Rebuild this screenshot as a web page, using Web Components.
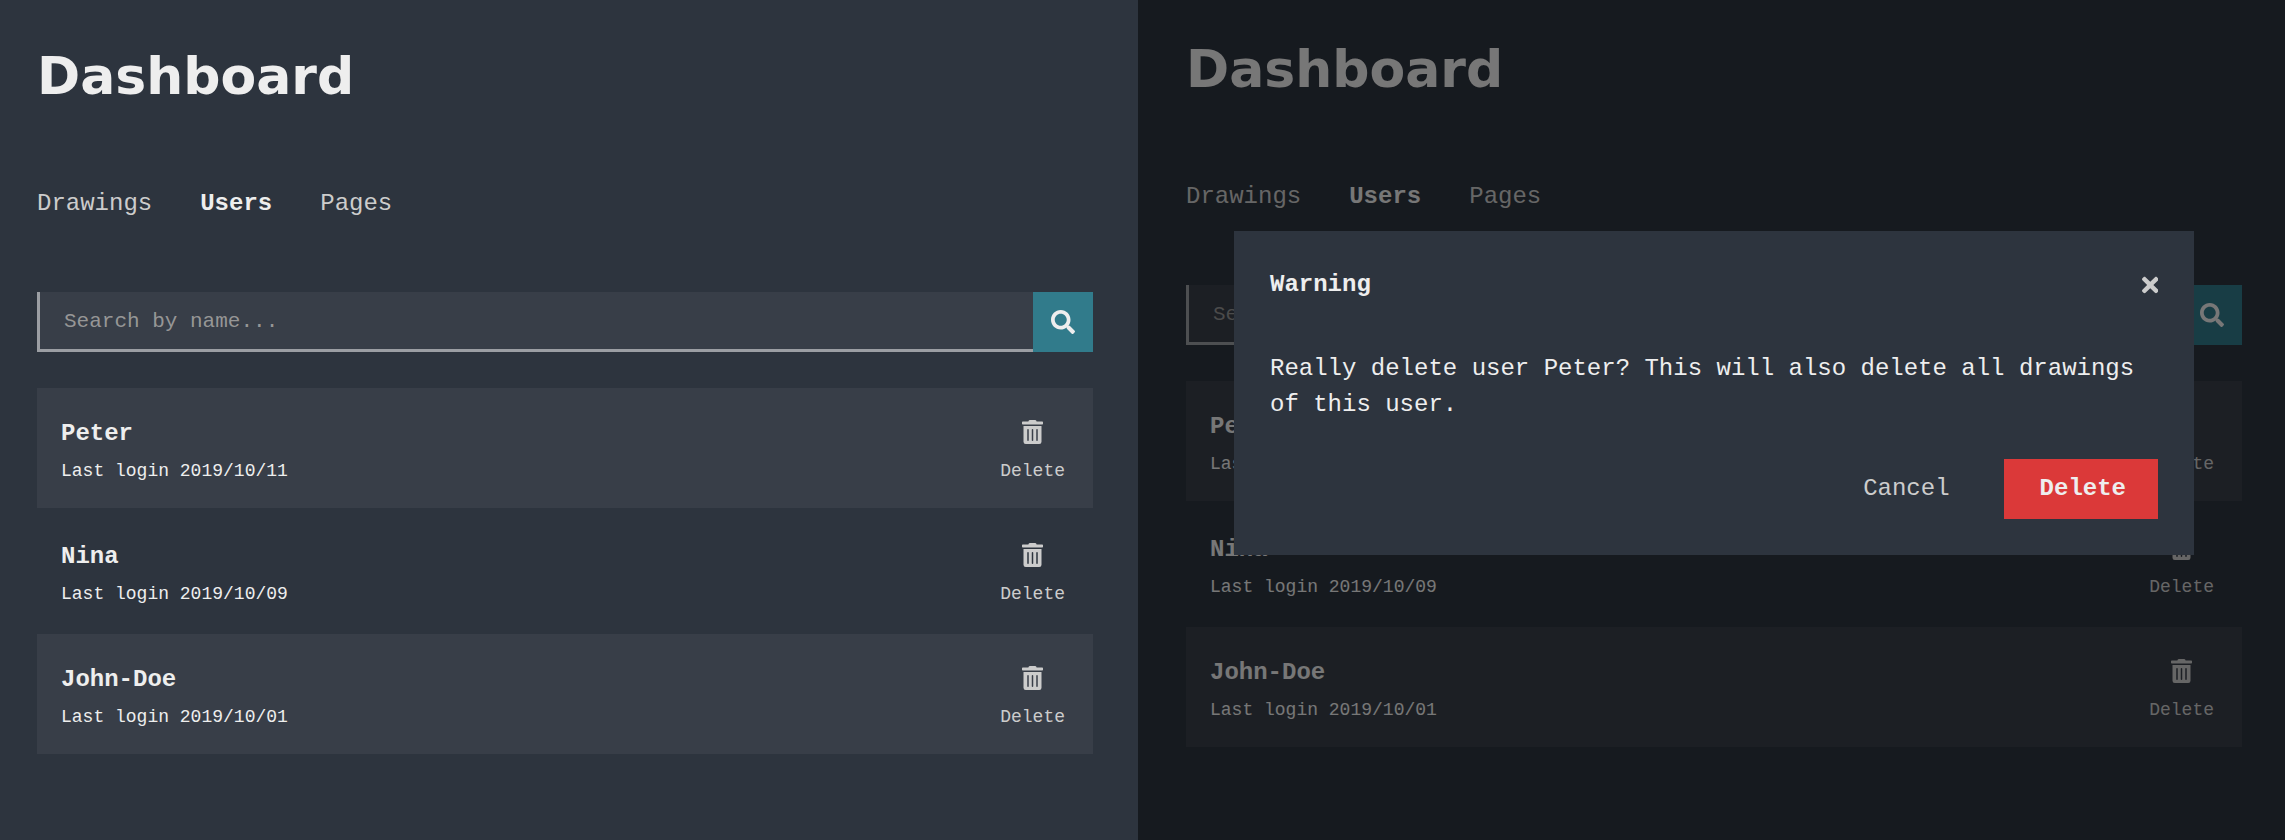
<!DOCTYPE html>
<html lang="en">
<head>
<meta charset="utf-8">
<title>Dashboard</title>
<style>
  :root {
    --bg: #2d343e;
    --raised: #383e48;
    --text: #eeeeee;
    --muted: #cccccc;
    --accent: #317b8b;
    --danger: #db3939;
  }
  body {
    margin: 0;
    background: var(--bg);
    color: var(--text);
    font: 24px/36px "Liberation Mono", monospace;
  }
</style>
</head>
<body>
<split-screen>
  <dashboard-page>
    <user-row name="Peter" login="2019/10/11"></user-row>
    <user-row name="Nina" login="2019/10/09"></user-row>
    <user-row name="John-Doe" login="2019/10/01"></user-row>
  </dashboard-page>
  <dashboard-page class="dimmed">
    <user-row name="Peter" login="2019/10/11"></user-row>
    <user-row name="Nina" login="2019/10/09"></user-row>
    <user-row name="John-Doe" login="2019/10/01"></user-row>
    <confirm-dialog slot="overlay" heading="Warning" action="Delete">Really delete user Peter? This will also delete all drawings of this user.</confirm-dialog>
  </dashboard-page>
</split-screen>

<script>
const ICONS = {
  search: ['0 0 512 512', 'M505 442.7L405.3 343c-4.5-4.5-10.6-7-17-7H372c27.6-35.3 44-79.7 44-128C416 93.1 322.9 0 208 0S0 93.1 0 208s93.1 208 208 208c48.3 0 92.7-16.4 128-44v16.3c0 6.4 2.5 12.5 7 17l99.7 99.7c9.4 9.4 24.6 9.4 33.9 0l28.3-28.3c9.4-9.4 9.4-24.6.1-34zM208 336c-70.7 0-128-57.2-128-128 0-70.7 57.2-128 128-128 70.7 0 128 57.2 128 128 0 70.7-57.2 128-128 128z'],
  trash: ['0 0 448 512', 'M32 464a48 48 0 0 0 48 48h288a48 48 0 0 0 48-48V128H32zm272-256a16 16 0 0 1 32 0v224a16 16 0 0 1-32 0zm-96 0a16 16 0 0 1 32 0v224a16 16 0 0 1-32 0zm-96 0a16 16 0 0 1 32 0v224a16 16 0 0 1-32 0zM432 32H312l-9.4-18.7A24 24 0 0 0 281.1 0H166.8a23.72 23.72 0 0 0-21.4 13.3L136 32H16A16 16 0 0 0 0 48v32a16 16 0 0 0 16 16h416a16 16 0 0 0 16-16V48a16 16 0 0 0-16-16z'],
  close: ['0 0 352 512', 'M242.72 256l100.07-100.07c12.28-12.28 12.28-32.19 0-44.48l-22.24-22.24c-12.28-12.28-32.19-12.28-44.48 0L176 189.28 75.93 89.21c-12.28-12.28-32.19-12.28-44.48 0L9.21 111.45c-12.28 12.28-12.28 32.19 0 44.48L109.28 256 9.21 356.07c-12.28 12.28-12.28 32.19 0 44.48l22.24 22.24c12.28 12.28 32.2 12.28 44.48 0L176 322.72l100.07 100.07c12.28 12.28 32.2 12.28 44.48 0l22.24-22.24c12.28-12.28 12.28-32.19 0-44.48L242.72 256z']
};
const RESET = `
  *, *::before, *::after { box-sizing: border-box; }
  button { margin: 0; padding: 0; border: 0; background: none; color: inherit; font: inherit; cursor: pointer; }
`;

class AppIcon extends HTMLElement {
  connectedCallback() {
    const [box, path] = ICONS[this.getAttribute('name')];
    this.attachShadow({ mode: 'open' }).innerHTML = `
      <style>
        :host { display: flex; }
        svg { display: block; height: 24px; fill: currentColor; }
      </style>
      <svg viewBox="${box}" aria-hidden="true"><path d="${path}"/></svg>`;
  }
}

class SplitScreen extends HTMLElement {
  connectedCallback() {
    this.attachShadow({ mode: 'open' }).innerHTML = `
      <style>
        :host { display: grid; grid-template-columns: 1138fr 1147fr; min-height: 100vh; }
        ::slotted(*) { --page-padding: 46px 45px 36px 37px; }
        ::slotted(.dimmed) { --page-padding: 39px 43px 36px 48px; }
      </style>
      <slot></slot>`;
  }
}

class NavTabs extends HTMLElement {
  connectedCallback() {
    this.attachShadow({ mode: 'open' }).innerHTML = `
      <style>
        :host { display: block; }
        nav { display: flex; gap: 48px; }
        a { color: var(--muted); text-decoration: none; }
        a[aria-current] { color: var(--text); font-weight: bold; }
      </style>
      <nav aria-label="Sections">
        <a href="#drawings">Drawings</a>
        <a href="#users" aria-current="page">Users</a>
        <a href="#pages">Pages</a>
      </nav>`;
  }
}

class SearchBox extends HTMLElement {
  connectedCallback() {
    this.attachShadow({ mode: 'open' }).innerHTML = `
      <style>
        ${RESET}
        :host { display: block; }
        form { display: flex; height: 60px; }
        input {
          flex: 1; min-width: 0; margin: 0; padding: 2px 24px 0;
          border: solid #9b9ea3; border-width: 0 0 3px 3px; border-radius: 0;
          background: var(--raised); color: var(--text);
          font: 21px "Liberation Mono", monospace; outline: 0;
        }
        input::placeholder { color: #969696; opacity: 1; }
        button { width: 60px; display: grid; place-items: center; background: var(--accent); color: var(--text); }
      </style>
      <form role="search" onsubmit="return false">
        <input type="text" placeholder="Search by name..." aria-label="Search by name">
        <button aria-label="Search"><app-icon name="search"></app-icon></button>
      </form>`;
  }
}

class UserRow extends HTMLElement {
  connectedCallback() {
    this.attachShadow({ mode: 'open' }).innerHTML = `
      <style>
        ${RESET}
        :host { display: block; }
        article { display: flex; justify-content: space-between; padding: 28px 28px 18px 24px; }
        h2 { margin: 0; font-size: 24px; line-height: 36px; }
        p { margin: 0; font-size: 18px; line-height: 38px; }
        button { display: flex; flex-direction: column; align-items: center; color: var(--muted); font-size: 18px; line-height: 38px; }
        app-icon { height: 36px; padding-top: 4px; }
      </style>
      <article>
        <div><h2></h2><p></p></div>
        <button><app-icon name="trash"></app-icon><span>Delete</span></button>
      </article>`;
    this.shadowRoot.querySelector('h2').textContent = this.getAttribute('name');
    this.shadowRoot.querySelector('p').textContent = 'Last login ' + this.getAttribute('login');
  }
}

class DashboardPage extends HTMLElement {
  connectedCallback() {
    this.attachShadow({ mode: 'open' }).innerHTML = `
      <style>
        ${RESET}
        :host { display: block; position: relative; min-width: 0; background: var(--bg); }
        main { padding: var(--page-padding); }
        h1 { margin: 0 0 80px; font: bold 52px/60px "DejaVu Sans", sans-serif; }
        nav-tabs { margin-bottom: 70px; }
        search-box { margin-bottom: 36px; }
        .users { display: grid; gap: 3px; }
        .users ::slotted(:nth-child(odd)) { background: var(--raised); }
      </style>
      <main>
        <h1>Dashboard</h1>
        <nav-tabs></nav-tabs>
        <search-box></search-box>
        <div class="users"><slot></slot></div>
      </main>
      <slot name="overlay"></slot>`;
  }
}

class ConfirmDialog extends HTMLElement {
  connectedCallback() {
    this.attachShadow({ mode: 'open' }).innerHTML = `
      <style>
        ${RESET}
        :host {
          position: absolute; inset: 0;
          display: flex; align-items: center; justify-content: center;
          padding: 0 43px 54px 48px; background: rgba(0, 0, 0, .5);
        }
        section { width: 100%; max-width: 960px; padding: 36px; background: var(--bg); }
        header { display: flex; justify-content: space-between; align-items: center; margin-bottom: 48px; }
        h2 { margin: 0; font-size: 24px; line-height: 36px; }
        header button, .cancel { color: var(--muted); }
        p { margin: 0 0 36px; }
        footer { display: flex; justify-content: flex-end; gap: 36px; }
        footer button { height: 60px; }
        .cancel { padding: 0 18px; }
        .confirm { padding: 0 32px 0 36px; background: var(--danger); color: var(--text); font-weight: bold; }
      </style>
      <section role="dialog" aria-modal="true" aria-labelledby="heading">
        <header>
          <h2 id="heading"></h2>
          <button aria-label="Close"><app-icon name="close"></app-icon></button>
        </header>
        <p><slot></slot></p>
        <footer>
          <button class="cancel">Cancel</button>
          <button class="confirm"></button>
        </footer>
      </section>`;
    this.shadowRoot.querySelector('h2').textContent = this.getAttribute('heading');
    this.shadowRoot.querySelector('.confirm').textContent = this.getAttribute('action');
  }
}

customElements.define('app-icon', AppIcon);
customElements.define('nav-tabs', NavTabs);
customElements.define('search-box', SearchBox);
customElements.define('user-row', UserRow);
customElements.define('confirm-dialog', ConfirmDialog);
customElements.define('dashboard-page', DashboardPage);
customElements.define('split-screen', SplitScreen);
</script>
</body>
</html>
